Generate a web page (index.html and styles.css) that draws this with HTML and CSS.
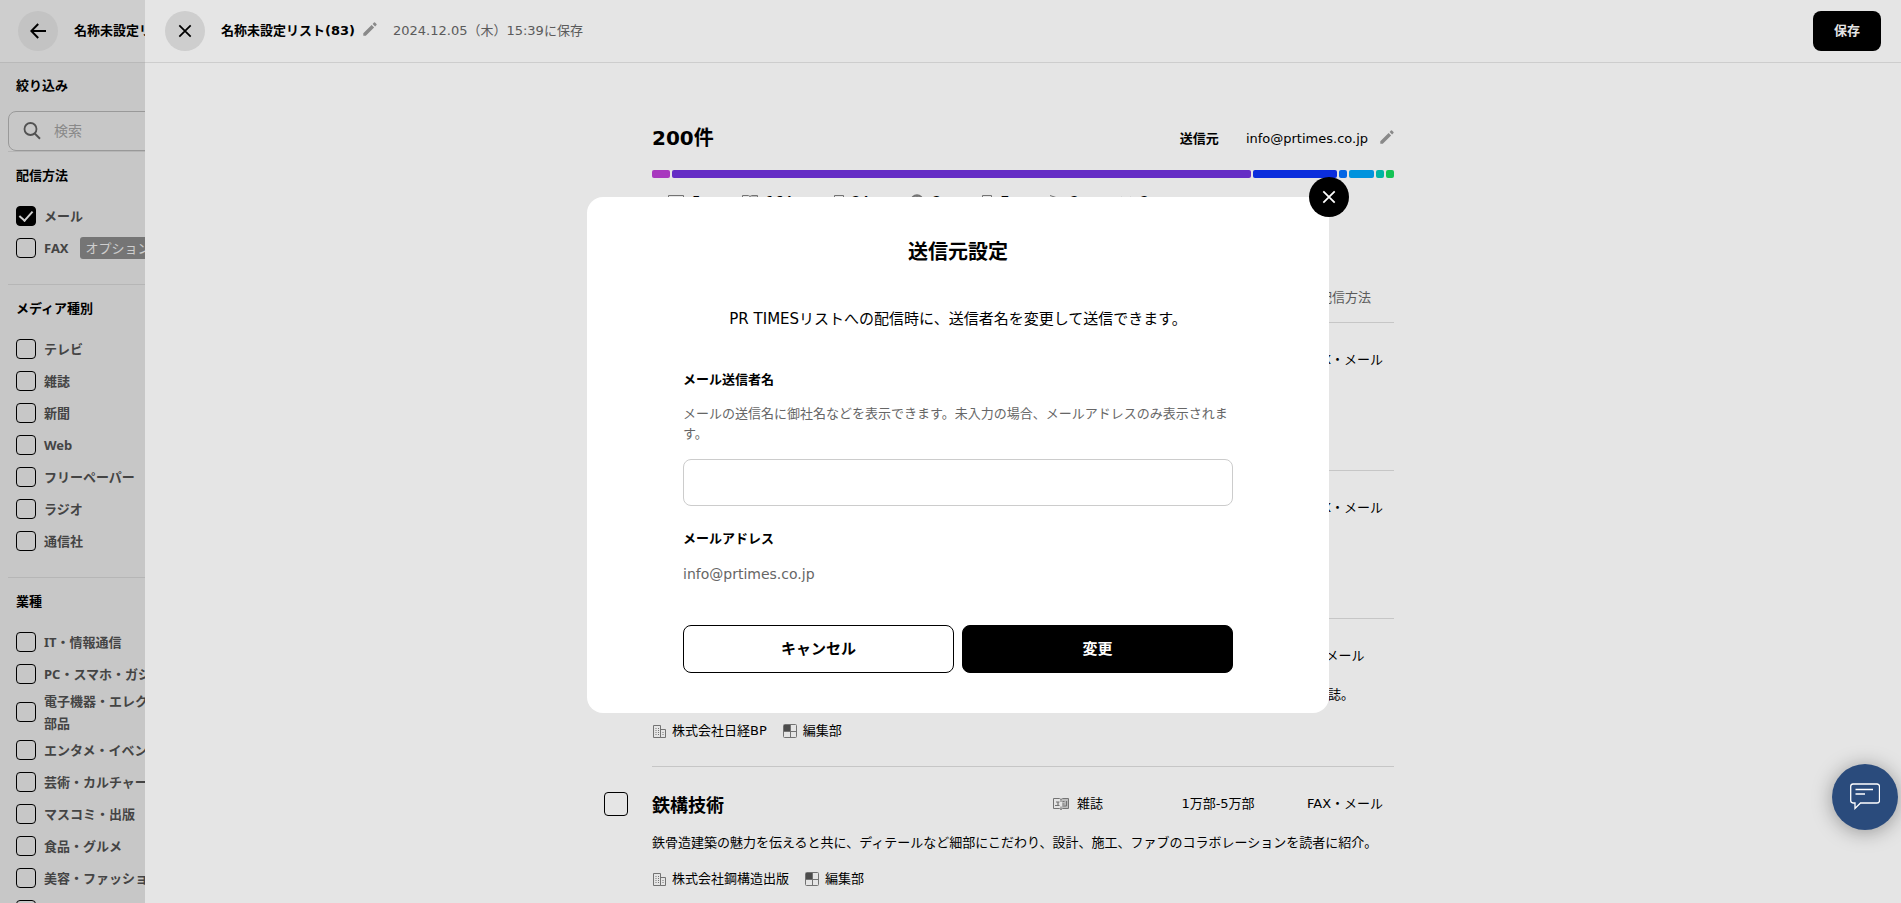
FILE: index.html
```html
<!DOCTYPE html>
<html lang="ja">
<head>
<meta charset="utf-8">
<meta name="viewport" content="width=device-width, initial-scale=1">
<title>名称未設定リスト(83)</title>
<link rel="stylesheet" href="styles.css">
</head>
<body>
<svg class="defs" aria-hidden="true">
  <symbol id="i-close" viewBox="0 0 16 16"><path d="M1.500 1.500 14.500 14.500M14.500 1.500 1.500 14.500" fill="none" stroke="currentColor" stroke-width="2"/></symbol>
  <symbol id="i-back" viewBox="0 0 16 16"><path d="M16 8H1.500M8.200 1 1.300 8l6.900 7" fill="none" stroke="currentColor" stroke-width="2"/></symbol>
  <symbol id="i-pencil" viewBox="0 0 14 14"><path d="M.3 13.700v-2.500L8.600 2.900l2.500 2.500-8.300 8.300zM9.600 1.900 11 .5q.5-.4 1 0l1.500 1.500q.4.500 0 1l-1.400 1.400z" fill="currentColor"/></symbol>
  <symbol id="i-search" viewBox="0 0 18 18"><circle cx="7.500" cy="7" r="6" fill="none" stroke="currentColor" stroke-width="1.800"/><path d="m11.500 11.300 5.500 5.500" stroke="currentColor" stroke-width="2"/></symbol>
  <symbol id="i-building" viewBox="0 0 14 14"><path d="M1.500 13.500V1.500h7v12zM8.500 5.500h5v8h-5z" fill="none" stroke="currentColor"/><path d="M4 4v8M6.500 4v8M11 8v4" stroke="currentColor" stroke-dasharray="1 1"/></symbol>
  <symbol id="i-dept" viewBox="0 0 14 14"><rect x=".5" y=".5" width="13" height="13" rx="1" fill="none" stroke="currentColor"/><path d="M7.500 0v14M0 7.500h14" stroke="currentColor"/><path d="M1 1h6v6H1z" fill="#555"/></symbol>
  <symbol id="i-book" viewBox="0 0 16 12"><path d="M9 1h6v9H9z" fill="currentColor" opacity=".35"/><path d="M.5.5h6L8 1.500 9.500.5h6v10h-6L8 11.500 6.500 10.500h-6zM8 1.500V4M8 8.500v3" fill="none" stroke="currentColor"/><path d="M3 4h3.500M2 7.500h4.500M5 4v3M9.500 3.500h2M9.500 6h2M9.500 8h4M13.500 3v5" fill="none" stroke="currentColor" stroke-width="1.200"/></symbol>
  <symbol id="i-tv" viewBox="0 0 16 12"><path d="M.5.5h15v9H.5zM4 11.500h8" fill="none" stroke="currentColor"/></symbol>
  <symbol id="i-paper" viewBox="0 0 10 12"><path d="M.5.5h9v11h-9zM3 4h4M3 7h4" fill="none" stroke="currentColor"/></symbol>
  <symbol id="i-globe" viewBox="0 0 14 14"><circle cx="7" cy="7" r="6" fill="#999" stroke="currentColor" stroke-width="1.500"/><path d="M1 7h12M7 1v12" stroke="currentColor"/></symbol>
  <symbol id="i-radio" viewBox="0 0 12 12"><path d="m0 .5 9 3M.5 3.500h11v8H.5z" fill="none" stroke="currentColor"/></symbol>
  <symbol id="i-agency" viewBox="0 0 12 12"><path d="M1 2l4 3M11 2 7 5M6 5v7" fill="none" stroke="currentColor"/></symbol>
  <symbol id="i-chat" viewBox="0 0 30 28"><path d="M3 1h24a2.500 2.500 0 0 1 2.500 2.500v14A2.500 2.500 0 0 1 27 20H10.500L5 25.500V20H3A2.500 2.500 0 0 1 .7 17.500v-14A2.500 2.500 0 0 1 3 1z" fill="none" stroke="currentColor" stroke-width="1.300"/><path d="M5.500 6.500H23M5.500 11H15" stroke="currentColor" stroke-width="1.300"/></symbol>
</svg>

<div class="page">
  <header class="bar">
    <button class="round" type="button" aria-label="戻る"><svg width="16" height="16"><use href="#i-back"/></svg></button>
    <h1 class="bar-title">名称未設定リスト(83)</h1>
  </header>
  <aside class="filters">
    <h2 class="filters-title">絞り込み</h2>
    <div class="search">
      <svg width="18" height="18"><use href="#i-search"/></svg>
      <input type="search" placeholder="検索" aria-label="検索">
    </div>
    <section class="group">
      <h3>配信方法</h3>
      <label><input class="check" type="checkbox" checked><span>メール</span></label>
      <label><input class="check" type="checkbox"><span>FAX</span><em class="option">オプション</em></label>
    </section>
    <section class="group">
      <h3>メディア種別</h3>
      <label><input class="check" type="checkbox"><span>テレビ</span></label>
      <label><input class="check" type="checkbox"><span>雑誌</span></label>
      <label><input class="check" type="checkbox"><span>新聞</span></label>
      <label><input class="check" type="checkbox"><span>Web</span></label>
      <label><input class="check" type="checkbox"><span>フリーペーパー</span></label>
      <label><input class="check" type="checkbox"><span>ラジオ</span></label>
      <label><input class="check" type="checkbox"><span>通信社</span></label>
    </section>
    <section class="group">
      <h3>業種</h3>
      <label><input class="check" type="checkbox"><span>IT・情報通信</span></label>
      <label><input class="check" type="checkbox"><span>PC・スマホ・ガジェット</span></label>
      <label><input class="check" type="checkbox"><span>電子機器・エレクトロニクス<br>部品</span></label>
      <label><input class="check" type="checkbox"><span>エンタメ・イベント</span></label>
      <label><input class="check" type="checkbox"><span>芸術・カルチャー</span></label>
      <label><input class="check" type="checkbox"><span>マスコミ・出版</span></label>
      <label><input class="check" type="checkbox"><span>食品・グルメ</span></label>
      <label><input class="check" type="checkbox"><span>美容・ファッション</span></label>
      <label><input class="check" type="checkbox" aria-label="その他"></label>
    </section>
  </aside>
</div>

<div class="drawer-layer">
  <section class="drawer">
    <header class="bar">
      <button class="round" type="button" aria-label="閉じる"><svg width="14" height="14"><use href="#i-close"/></svg></button>
      <h2 class="bar-title">名称未設定リスト(83)</h2>
      <button class="pencil" type="button" aria-label="名称を編集"><svg width="14" height="14"><use href="#i-pencil"/></svg></button>
      <p class="saved">2024.12.05（木）15:39に保存</p>
      <button class="save" type="button">保存</button>
    </header>
    <main class="content">
      <div class="summary">
        <p class="total">200件</p>
        <dl class="sender"><dt>送信元</dt><dd>info@prtimes.co.jp</dd></dl>
        <button class="pencil" type="button" aria-label="送信元を編集"><svg width="14" height="14"><use href="#i-pencil"/></svg></button>
      </div>
      <div class="ratio">
        <i class="tv" style="flex-grow:18"></i>
        <i class="magazine" style="flex-grow:579"></i>
        <i class="news" style="flex-grow:84"></i>
        <i class="web" style="flex-grow:8"></i>
        <i class="free" style="flex-grow:25"></i>
        <i class="radio" style="flex-grow:8"></i>
        <i class="agency" style="flex-grow:8"></i>
      </div>
      <ul class="stats">
        <li><svg width="16" height="12"><use href="#i-tv"/></svg>5</li>
        <li><svg width="16" height="12"><use href="#i-book"/></svg>164</li>
        <li><svg width="10" height="12"><use href="#i-paper"/></svg>24</li>
        <li><svg width="14" height="14"><use href="#i-globe"/></svg>2</li>
        <li><svg width="10" height="12"><use href="#i-paper"/></svg>7</li>
        <li><svg width="12" height="12"><use href="#i-radio"/></svg>2</li>
        <li><svg width="12" height="12"><use href="#i-agency"/></svg>2</li>
      </ul>
      <table class="media">
        <colgroup><col class="c-check"><col><col class="c-type"><col class="c-copies"><col class="c-method"></colgroup>
        <thead><tr><td></td><th></th><th></th><th></th><th>配信方法</th></tr></thead>
        <tbody>
          <tr class="head"><td></td><td></td><td></td><td></td><td>FAX・メール</td></tr>
          <tr class="detail"><td></td><td colspan="4"><p class="about"></p><p class="org"></p></td></tr>
        </tbody>
        <tbody>
          <tr class="head"><td></td><td></td><td></td><td></td><td>FAX・メール</td></tr>
          <tr class="detail"><td></td><td colspan="4"><p class="about"></p><p class="org"></p></td></tr>
        </tbody>
        <tbody>
          <tr class="head"><td></td><td></td><td></td><td></td><td>メール</td></tr>
          <tr class="detail"><td></td><td colspan="4"><p class="about end">誌。</p>
            <p class="org"><span><svg width="14" height="14"><use href="#i-building"/></svg>株式会社日経BP</span><span><svg width="14" height="14"><use href="#i-dept"/></svg>編集部</span></p></td></tr>
        </tbody>
        <tbody>
          <tr class="head"><td><input class="check large" type="checkbox" aria-label="鉄構技術"></td><td class="name">鉄構技術</td><td><span class="type"><svg width="16" height="12"><use href="#i-book"/></svg>雑誌</span></td><td>1万部-5万部</td><td>FAX・メール</td></tr>
          <tr class="detail"><td></td><td colspan="4"><p class="about">鉄骨造建築の魅力を伝えると共に、ディテールなど細部にこだわり、設計、施工、ファブのコラボレーションを読者に紹介。</p>
            <p class="org"><span><svg width="14" height="14"><use href="#i-building"/></svg>株式会社鋼構造出版</span><span><svg width="14" height="14"><use href="#i-dept"/></svg>編集部</span></p></td></tr>
        </tbody>
      </table>
    </main>
  </section>
</div>

<div class="modal-layer">
  <form class="modal" role="dialog" aria-labelledby="modal-title">
    <button class="modal-close" type="button" aria-label="閉じる"><svg width="14" height="14"><use href="#i-close"/></svg></button>
    <h2 id="modal-title">送信元設定</h2>
    <p class="lead">PR TIMESリストへの配信時に、送信者名を変更して送信できます。</p>
    <label class="label" for="sender-name">メール送信者名</label>
    <p class="help" id="sender-help">メールの送信名に御社名などを表示できます。未入力の場合、メールアドレスのみ表示されます。</p>
    <input class="field" id="sender-name" type="text" aria-describedby="sender-help">
    <h3 class="label">メールアドレス</h3>
    <p class="mail">info@prtimes.co.jp</p>
    <div class="actions">
      <button type="button">キャンセル</button>
      <button class="primary" type="button">変更</button>
    </div>
  </form>
</div>

<button class="chat" type="button" aria-label="チャット"><svg width="30" height="28"><use href="#i-chat"/></svg></button>
</body>
</html>
```

FILE: styles.css
```css
* { box-sizing: border-box; margin: 0; padding: 0; }
body {
  height: 100vh;
  overflow: hidden;
  font: 13px/24px "DejaVu Sans", "Noto Sans CJK JP", sans-serif;
  color: #000;
  background: #fff;
}
button, input { font: inherit; color: inherit; }
button { border: 0; background: none; cursor: pointer; }
svg { display: block; flex: none; }
ul { list-style: none; }
.defs { position: absolute; width: 0; height: 0; }

/* header bars */
.bar {
  display: flex;
  align-items: center;
  height: 63px;
  padding: 0 20px 1px;
  border-bottom: 1px solid #e5e5e5;
  background: #fff;
}
.round {
  display: grid;
  place-items: center;
  width: 40px;
  height: 40px;
  border-radius: 50%;
  background: #e6e6e6;
}
.bar-title { margin-left: 16px; font-size: 13px; font-weight: bold; white-space: nowrap; }
.pencil { margin-left: 8px; padding-bottom: 3px; color: #999; }
.saved { margin-left: 16px; color: #666; }
.save {
  height: 40px;
  margin-left: auto;
  padding: 0 21px;
  border-radius: 8px;
  background: #000;
  color: #fff;
  font-weight: bold;
}

/* filter column */
.page { min-height: 100vh; background: #f7f7f7; }
.page > .bar { padding-left: 18px; }
.page .round { background: #f2f2f2; }
.filters { width: 272px; padding: 12px 8px 0; line-height: 22px; }
.filters-title, .group h3 { padding-left: 8px; font-size: 13px; font-weight: bold; }
.search {
  display: flex;
  align-items: center;
  gap: 13px;
  height: 40px;
  margin-top: 14px;
  padding-left: 14px;
  border: 1px solid #bebebe;
  border-radius: 8px;
  color: #666;
}
.search input { flex: 1; min-width: 0; border: 0; outline: 0; background: none; font-size: 14px; }
.search input::placeholder { color: #aaa; }
.group { padding: 13px 0 20px; border-top: 1px solid #e2e2e2; }
.group h3 { margin-bottom: 13px; }
.group label {
  display: flex;
  align-items: center;
  gap: 8px;
  min-height: 32px;
  padding-left: 8px;
  font-family: "Noto Sans", "Noto Sans CJK JP", sans-serif;
  font-weight: bold;
  color: #555;
  white-space: nowrap;
}
.option { margin-left: 3px; padding: 0 6px; border-radius: 3px; background: #919191; color: #fff; font-style: normal; font-weight: normal; }
.check {
  appearance: none;
  flex: none;
  display: grid;
  place-items: center;
  width: 20px;
  height: 20px;
  border: 1px solid #000;
  border-radius: 4px;
}
.check:checked { background: #000; }
.check:checked::after {
  content: "";
  width: 6px;
  height: 11px;
  margin-bottom: 3px;
  border: solid #fff;
  border-width: 0 2px 2px 0;
  rotate: 42deg;
}
.check.large { width: 24px; height: 24px; }

/* list drawer */
.drawer-layer, .modal-layer { position: fixed; inset: 0; background: rgba(0, 0, 0, .1); }
.drawer-layer { padding-left: 145px; }
.drawer { height: 100%; overflow: hidden; background: #fff; }
.content { max-width: 742px; margin: 0 auto; padding-top: 62px; }
.summary { display: flex; align-items: center; }
.total { font-size: 20px; font-weight: bold; }
.sender { display: flex; gap: 27px; margin: 2px 0 0 auto; }
.sender dt { font-weight: bold; }
.summary .pencil { margin-left: 12px; }
.ratio { display: flex; gap: 2px; height: 8px; margin-top: 19px; }
.ratio i { flex: 0 1 0; border-radius: 2px; }
.tv { background: #bc40d4; }
.magazine { background: #7133dc; }
.news { background: #0d34f5; }
.web { background: #0071ff; }
.free { background: #00a4f7; }
.radio { background: #00c9b7; }
.agency { background: #17da5e; }
.stats { display: flex; gap: 41px; padding: 11px 16px 73px; font-size: 14px; }
.stats li { display: flex; align-items: center; gap: 8px; }
.stats svg, .type svg, .org svg { color: #808080; }

.media { width: calc(100% + 48px); margin-left: -48px; border-collapse: collapse; table-layout: fixed; }
.c-check { width: 48px; }
.c-type { width: 124px; }
.c-copies { width: 156px; }
.c-method { width: 98px; }
.media th { height: 36px; padding-bottom: 12px; border-bottom: 1px solid #ddd; color: #666; font-weight: normal; }
.head td { height: 49px; padding-top: 25px; text-align: center; vertical-align: top; }
.head td:first-child { text-align: left; }
.head .name { font: bold 18px/24px "Noto Sans CJK JP", sans-serif; text-align: left; }
.type { display: flex; justify-content: center; align-items: center; gap: 8px; }
.detail td + td { padding: 15px 0 23px; border-bottom: 1px solid #ddd; }
.about { height: 24px; white-space: nowrap; }
.about.end { padding-right: 40px; text-align: right; }
.org { display: flex; gap: 16px; height: 24px; margin-top: 12px; }
.org span { display: flex; align-items: center; gap: 6px; }

/* sender dialog */
.modal-layer { display: grid; place-items: center; padding: 7px 0 0 15px; }
.modal {
  position: relative;
  width: 742px;
  padding: 40px 96px;
  border-radius: 16px;
  background: #fff;
}
.modal-close {
  position: absolute;
  top: -20px;
  right: -20px;
  display: grid;
  place-items: center;
  width: 40px;
  height: 40px;
  border-radius: 50%;
  background: #000;
  color: #fff;
}
.modal h2 { font-size: 20px; line-height: 30px; text-align: center; }
.lead { margin: 40px 0 37px; font-size: 15px; text-align: center; }
.label { display: block; font-size: 13px; font-weight: bold; }
.help { margin: 12px 0 15px; line-height: 20px; color: #666; }
.field { display: block; width: 100%; height: 47px; margin-bottom: 21px; padding: 0 12px; border: 1px solid #ccc; border-radius: 8px; }
.mail { margin: 11px 0 39px; font-size: 14px; color: #666; }
.actions { display: flex; gap: 8px; }
.actions button { flex: 1; height: 48px; border: 1px solid #000; border-radius: 8px; font-size: 15px; font-weight: bold; }
.actions .primary { background: #000; color: #fff; }

.chat {
  position: fixed;
  right: 3px;
  bottom: 73px;
  display: grid;
  place-items: center;
  width: 66px;
  height: 66px;
  border-radius: 50%;
  background: #2a4b7c;
  color: #fff;
  box-shadow: 0 2px 20px rgba(0, 0, 0, .35);
}
```
